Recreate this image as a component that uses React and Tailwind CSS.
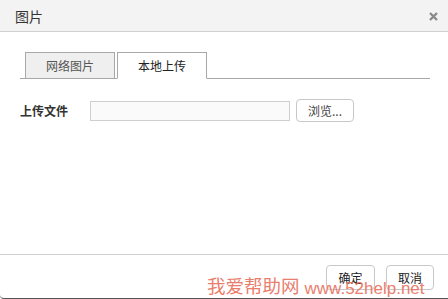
import React from 'react';

const font = { fontFamily: '"Noto Sans CJK SC", "Liberation Sans", sans-serif' };

const App = () => {
  return (
    <div className="relative w-[448px] h-[299px] bg-white flex flex-col overflow-hidden border-b border-[#555] rounded-bl-[4px]" style={font}>
      {/* header */}
      <div className="h-[32px] shrink-0 bg-[#f3f3f3] border-b border-[#d0d0d0] flex items-center justify-between pl-[15px] pr-[10px]">
        <span className="text-[14px] text-[#333] leading-none">图片</span>
        <svg width="9" height="9" viewBox="0 0 9 9" className="mt-[1px]">
          <path d="M1 1 L8 8 M8 1 L1 8" stroke="#8a8a8a" strokeWidth="2.4" />
        </svg>
      </div>

      {/* body */}
      <div className="flex-1 pt-[20px] px-[20px] pr-[18px]">
        <div className="flex border-b border-[#a8a8a8] pl-[5px] gap-[2px] h-[27px]">
          <div className="w-[90px] h-[27px] bg-[#efefef] border border-[#a8a8a8] flex items-center justify-center text-[12px] text-[#555]">
            网络图片
          </div>
          <div className="w-[90px] h-[27px] bg-white border border-[#a8a8a8] border-b-white flex items-center justify-center text-[12px] text-[#222]">
            本地上传
          </div>
        </div>

        <div className="flex items-center mt-[20px]">
          <span className="w-[70px] text-[12px] font-bold text-[#333]">上传文件</span>
          <div className="w-[200px] h-[20px] bg-[#fafafa] border border-[#cfcfcf]" />
          <button className="ml-[6px] w-[58px] h-[23px] bg-white border border-[#c8c8c8] rounded-[4px] text-[12px] text-[#444]">
            浏览...
          </button>
        </div>
      </div>

      {/* footer */}
      <div className="h-[44px] shrink-0 border-t border-[#cfcfcf] flex items-start justify-end gap-[11px] pt-[10px] pr-[14px]">
        <button className="w-[49px] h-[25px] bg-white border border-[#c8c8c8] rounded-[4px] text-[12px] text-[#222]">确定</button>
        <button className="w-[48px] h-[25px] bg-white border border-[#c8c8c8] rounded-[4px] text-[12px] text-[#222]">取消</button>
      </div>

      {/* watermark */}
      <div
        className="absolute left-[207px] top-[278px] flex items-end gap-[5px] leading-none text-[#e8705c] opacity-90 whitespace-nowrap pointer-events-none"
        style={{ fontFamily: '"Liberation Sans", "Noto Sans CJK SC", sans-serif' }}
      >
        <span className="text-[18.5px]">我爱帮助网</span>
        <span className="text-[17px]">www.52help.net</span>
      </div>
    </div>
  );
};

export default App;
